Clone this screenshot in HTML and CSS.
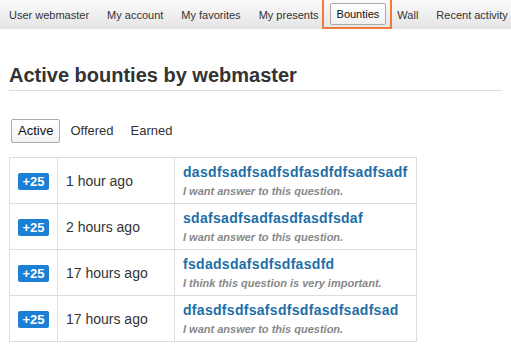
FILE: index.html
```html
<!DOCTYPE html>
<html>
<head>
<meta charset="utf-8">
<title>Bounties</title>
<link rel="stylesheet" href="styles.css">
</head>
<body>
  <div class="nav">
    <a href="#" class="nav-item">User webmaster</a>
    <a href="#" class="nav-item">My account</a>
    <a href="#" class="nav-item">My favorites</a>
    <a href="#" class="nav-item">My presents</a>
    <span class="nav-mark"><a href="#" class="nav-item current">Bounties</a></span>
    <a href="#" class="nav-item">Wall</a>
    <a href="#" class="nav-item">Recent activity</a>
  </div>

  <div class="main">
    <h1 class="title">Active bounties by webmaster</h1>

    <div class="tabs">
      <a href="#" class="tab on">Active</a>
      <a href="#" class="tab">Offered</a>
      <a href="#" class="tab">Earned</a>
    </div>

    <table class="bounties">
      <colgroup>
        <col class="w-badge">
        <col class="w-time">
        <col class="w-q">
      </colgroup>
      <tr>
        <td class="c-badge"><span class="badge">+25</span></td>
        <td class="c-time">1 hour ago</td>
        <td class="c-q">
          <a href="#" class="q-link">dasdfsadfsadfsdfasdfdfsadfsadf</a>
          <div class="q-note">I want answer to this question.</div>
        </td>
      </tr>
      <tr>
        <td class="c-badge"><span class="badge">+25</span></td>
        <td class="c-time">2 hours ago</td>
        <td class="c-q">
          <a href="#" class="q-link">sdafsadfsadfasdfasdfsdaf</a>
          <div class="q-note">I want answer to this question.</div>
        </td>
      </tr>
      <tr>
        <td class="c-badge"><span class="badge">+25</span></td>
        <td class="c-time">17 hours ago</td>
        <td class="c-q">
          <a href="#" class="q-link">fsdadsdafsdfsdfasdfd</a>
          <div class="q-note">I think this question is very important.</div>
        </td>
      </tr>
      <tr>
        <td class="c-badge"><span class="badge">+25</span></td>
        <td class="c-time">17 hours ago</td>
        <td class="c-q">
          <a href="#" class="q-link">dfasdfsdfsafsdfsdfasdfsadfsad</a>
          <div class="q-note">I want answer to this question.</div>
        </td>
      </tr>
    </table>
  </div>
</body>
</html>
```

FILE: styles.css
```css
body
{
	margin: 0;
	padding: 0;
	font-family: "Liberation Sans", Arial, sans-serif;
	color: #333;
	background: #fff;
}
a
{
	text-decoration: none;
}

.nav
{
	display: flex;
	align-items: center;
	height: 29px;
	background: linear-gradient(#fbfbfb, #e4e4e4);
	white-space: nowrap;
	overflow: hidden;
}
.nav-item
{
	font-size: 11px;
	color: #333;
	padding: 0 9px;
	line-height: 20px;
}
/* orange highlight round the current item, laid over the bar */
.nav-mark
{
	display: flex;
	align-items: center;
	height: 29px;
	padding: 0 4px 0 6px;
	margin: 0 -4px 0 -6px;
	box-sizing: border-box;
	border: 2px solid #ef7b3b;
	border-top: none;
}
.nav-item.current
{
	padding: 0 6px;
	border: 1px solid #aaa;
	border-radius: 2px;
	background: linear-gradient(#fff, #f0f0f0);
	color: #111;
}

.main
{
	padding: 0 9px;
}
.title
{
	margin: 0;
	padding: 35px 0 3px;
	font-size: 20px;
	font-weight: bold;
	color: #333;
	border-bottom: 1px solid #ddd;
}

.tabs
{
	display: flex;
	margin: 28px 0 14px 2px;
}
.tab
{
	font-size: 13px;
	color: #333;
	padding: 3px 6px;
	margin-right: 3px;
	border: 1px solid transparent;
	line-height: 16px;
}
.tab.on
{
	border-color: #aaa;
	border-radius: 2px;
	background: linear-gradient(#fff, #f2f2f2);
	color: #111;
}

.bounties
{
	border-collapse: collapse;
	table-layout: fixed;
	width: 408px;
}
.w-badge
{
	width: 48px;
}
.w-time
{
	width: 117px;
}
.bounties td
{
	border: 1px solid #ddd;
	height: 45px;
	padding: 0;
	vertical-align: middle;
}
.c-badge
{
	text-align: center;
}
.badge
{
	display: inline-block;
	background: #1b7fd6;
	color: #fff;
	font-size: 13px;
	font-weight: bold;
	line-height: 17px;
	padding: 0 4px;
	border-radius: 2px;
}
.bounties .c-time
{
	padding-left: 8px;
	font-size: 14px;
	color: #333;
}
.bounties .c-q
{
	padding-left: 8px;
	white-space: nowrap;
}
.q-link
{
	display: block;
	font-size: 14px;
	font-weight: bold;
	color: #1d6ea7;
	letter-spacing: 0.3px;
	line-height: 18px;
}
.q-note
{
	font-size: 11px;
	font-style: italic;
	font-weight: bold;
	color: #888;
	line-height: 14px;
	margin-top: 3px;
}
```
